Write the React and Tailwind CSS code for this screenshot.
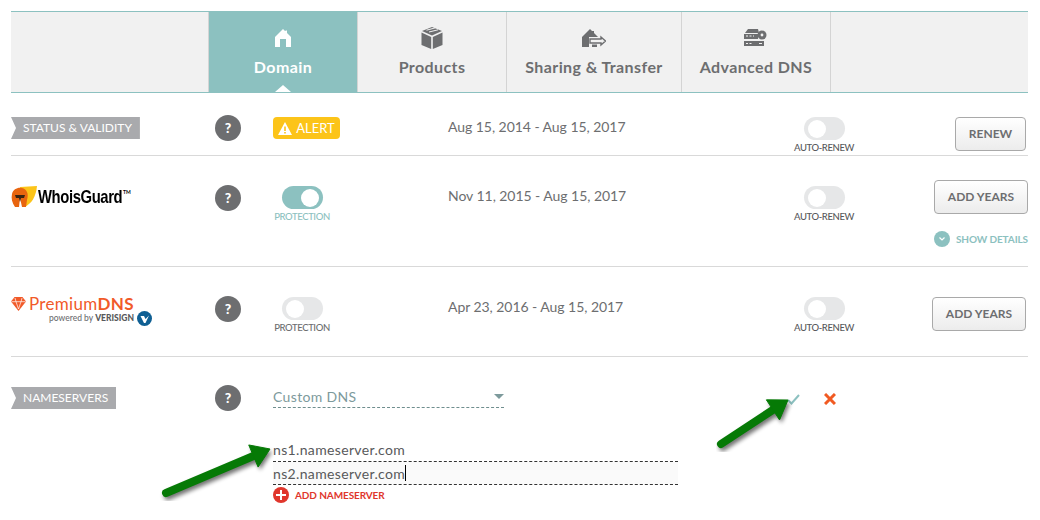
const HomeIcon = ({ className }) => (
  <svg viewBox="0 0 16 18" className={className} fill="currentColor">
    <path d="M8 0 L10 2 L11 1.5 L12 1.5 L12 4 L16 8 L16 18 L11 18 L11 10 L5 10 L5 18 L0 18 L0 8 L4 4 Z" />
  </svg>
);

const BoxIcon = ({ className }) => (
  <svg viewBox="0 0 22 22" className={className} fill="currentColor">
    <path d="M11 0 L21 4 L11 8.5 L1 4 Z" />
    <path d="M0.5 5.5 L10.2 10 L10.2 22 L0.5 18 Z" />
    <path d="M21.5 5.5 L11.8 10 L11.8 22 L21.5 18 Z" />
    <path d="M5.5 3.2 L14.5 0.8 M8 5 L17 2.8" stroke="#f1f1f1" strokeWidth="1" />
  </svg>
);

const TransferIcon = ({ className }) => (
  <svg viewBox="0 0 24 18" className={className} fill="currentColor">
    <path d="M8 0 L10 2 L12 2 L12 4 L16 8 L7 8 L7 18 L0 18 L0 8 Z" />
    <path d="M8 10 L19 10 L19 8 L23.5 12 L19 16 L19 14 L8 14 Z" fill="none" stroke="currentColor" strokeWidth="1.4" />
    <path d="M10 15.5 L15 15.5 L15 18 L10 18 Z" />
  </svg>
);

const ServerIcon = ({ className }) => (
  <svg viewBox="0 0 24 18" className={className} fill="currentColor">
    <path d="M4 0 L14 0 L15 4 L1 4 Z" />
    <path d="M0 5 L14 5 L14 10 L0 10 Z" />
    <path d="M0 12 L20 12 L20 17 L0 17 Z" />
    <circle cx="18" cy="6" r="4.5" />
    <circle cx="18" cy="6" r="1.4" fill="#f1f1f1" />
    <path d="M2 7 H4 M5.5 7 H7.5 M9 7 H10 M2 14.5 H4 M5.5 14.5 H7.5 M15 14.5 H18" stroke="#f1f1f1" strokeWidth="1.2" />
  </svg>
);

const Tab = ({ label, icon, active, width }) => (
  <div
    className={`relative flex flex-col items-center border-r border-[#d4d4d4] pt-[14px] ${width} ${
      active ? "bg-[#8cc1c0] text-white" : "text-[#6d6e70]"
    }`}
  >
    <div className="flex h-[24px] items-center">{icon}</div>
    <span className="mt-[7px] text-[16px] font-bold leading-[20px] tracking-[0.4px]">{label}</span>
    {active && (
      <span className="absolute bottom-0 left-1/2 h-0 w-0 -translate-x-1/2 border-x-[8px] border-b-[7px] border-x-transparent border-b-white" />
    )}
  </div>
);

const Question = () => (
  <div className="flex h-[26px] w-[26px] items-center justify-center rounded-full bg-[#6d6e70] text-[14px] font-black leading-none text-white">
    ?
  </div>
);

const Toggle = ({ on, label, labelClass }) => (
  <div className="flex flex-col items-center">
    <div
      className={`flex h-[23px] w-[41px] items-center rounded-full px-[4px] ${
        on ? "justify-end bg-[#8cc1c0]" : "justify-start bg-[#e6e7e8]"
      }`}
    >
      <div className="h-[18px] w-[18px] rounded-full bg-white" />
    </div>
    <span className={`mt-[2px] whitespace-nowrap text-[9.5px] font-medium leading-[12px] tracking-[-0.4px] ${labelClass}`}>{label}</span>
  </div>
);

const Tag = ({ children }) => (
  <div className="inline-flex h-[22px] items-center justify-self-start bg-[#a9aaad] pl-[12px] pr-[8px] text-[12px] leading-none text-white [clip-path:polygon(0_0,100%_0,100%_100%,0_100%,5px_50%)]">
    {children}
  </div>
);

const Button = ({ children, className }) => (
  <button
    className={`flex h-[34px] items-center justify-center rounded-[4px] border border-[#a9a9a9] bg-gradient-to-b from-white to-[#ececec] text-[12px] font-bold text-[#6d6e70] ${className}`}
  >
    {children}
  </button>
);

const WhoisGuardLogo = () => (
  <div className="flex items-center">
    <svg viewBox="0 0 27 23" className="h-[23px] w-[27px]">
      <path d="M9 1 L26 0 C25 10 21 18 13 21 Z" fill="#fcc419" />
      <path d="M1 8 C2 3 7 1 11 2 C16 3 18 8 16 14 L15 21 L11 21 L9 12 L8 21 L4 21 C1 17 0 12 1 8 Z" fill="#e8650f" />
      <path d="M4 9 H14 L13 12 L10 12 L9 16 L8 12 L5 12 Z" fill="#3a2412" />
    </svg>
    <div className="w-[84px]">
      <span className="inline-block origin-left scale-x-[0.78] font-['Liberation_Sans',sans-serif] text-[19px] font-bold leading-none tracking-[-0.5px] text-black">
        WhoisGuard
      </span>
    </div>
    <span className="mb-[10px] ml-[1px] text-[5px] font-bold leading-none text-black">TM</span>
  </div>
);

const PremiumLogo = () => (
  <div className="-mt-[1px] flex flex-col">
    <div className="flex items-center">
      <svg viewBox="0 0 15 14" className="h-[14px] w-[15px]" fill="#f15a29">
        <path d="M3.5 0 H11.5 L15 4.5 L7.5 14 L0 4.5 Z" />
        <path d="M0.5 4.7 H14.5 M4 1 L5 4.7 L7.5 12 L10 4.7 L11 1" stroke="#fff" strokeWidth="0.7" fill="none" />
      </svg>
      <span className="ml-[3px] text-[17px] leading-none tracking-[0.3px] text-[#f15a29]">
        Premium<span className="font-bold">DNS</span>
      </span>
    </div>
    <div className="-mt-[1px] ml-[38px] flex items-center">
      <span className="whitespace-nowrap text-[8.5px] font-medium leading-none text-[#6d6e70]">powered by</span>
      <span className="ml-[2px] text-[8.5px] font-black leading-none text-[#58595b]">VERISIGN</span>
      <div className="ml-[3px] flex h-[15px] w-[15px] items-center justify-center rounded-full bg-[#0f5f93]">
        <svg viewBox="0 0 10 10" className="h-[10px] w-[10px]" fill="#fff">
          <path d="M0.5 2 L4 2 L5.5 5 L9 1.5 L5.5 9 L4 9 Z" />
        </svg>
      </div>
    </div>
  </div>
);

const Row = ({ className, children }) => (
  <div className={`grid grid-cols-[204px_58px_175px_346px_60px_1fr] items-start border-b border-[#d9d9d9] ${className}`}>
    {children}
  </div>
);

const Arrow = ({ x1, y1, x2, y2 }) => {
  const a = Math.atan2(y2 - y1, x2 - x1);
  const back = 18;
  const spread = 12;
  const bx = x2 - Math.cos(a) * back;
  const by = y2 - Math.sin(a) * back;
  const px = -Math.sin(a) * spread;
  const py = Math.cos(a) * spread;
  const head = `M${x2} ${y2} L${bx + px} ${by + py} L${bx - px} ${by - py} Z`;
  return (
    <g>
      <g opacity="0.55" transform="translate(2 3)" filter="url(#blur)">
        <line x1={x1} y1={y1} x2={bx} y2={by} stroke="#000" strokeWidth="8" strokeLinecap="round" />
        <path d={head} fill="#000" />
      </g>
      <line x1={x1} y1={y1} x2={bx} y2={by} stroke="#067a06" strokeWidth="8" strokeLinecap="round" />
      <path d={head} fill="#067a06" stroke="#067a06" strokeWidth="1" strokeLinejoin="round" />
    </g>
  );
};

export default function App() {
  return (
    <div className="relative h-[520px] w-[1040px] overflow-hidden bg-white font-['Lato',sans-serif] text-[#6d6e70]">
      <div className="ml-[11px] w-[1017px] pt-[11px]">
        {/* Tabs */}
        <div className="flex h-[82px] border-y border-[#8cc1c0] bg-[#f1f1f1]">
          <div className="w-[198px] border-r border-[#d4d4d4]" />
          <Tab active width="w-[149px]" label="Domain" icon={<HomeIcon className="h-[18px] w-[16px]" />} />
          <Tab width="w-[149px]" label="Products" icon={<BoxIcon className="h-[22px] w-[22px]" />} />
          <Tab width="w-[175px]" label="Sharing & Transfer" icon={<TransferIcon className="h-[18px] w-[24px]" />} />
          <Tab width="w-[149px]" label="Advanced DNS" icon={<ServerIcon className="h-[18px] w-[24px]" />} />
        </div>

        {/* Status & validity */}
        <Row className="h-[63px] pt-[24px]">
          <Tag>STATUS &amp; VALIDITY</Tag>
          <div className="-mt-[2px]"><Question /></div>
          <div className="flex h-[22px] w-[67px] items-center justify-center rounded-[4px] bg-[#fcc419] text-[13px] leading-none text-white">
            <svg viewBox="0 0 14 13" className="mr-[4px] h-[13px] w-[14px]">
              <path d="M7 0 L14 13 L0 13 Z" fill="#fff" />
              <path d="M7 4.5 V9 M7 10 V11.5" stroke="#fcc419" strokeWidth="1.6" />
            </svg>
            ALERT
          </div>
          <span className="-mt-[1px] text-[14px] leading-[22px] tracking-[-0.05px]">Aug 15, 2014 - Aug 15, 2017</span>
          <Toggle label="AUTO-RENEW" labelClass="text-[#58595b]" />
          <div className="flex justify-end pr-[2px]">
            <Button className="w-[71px]">RENEW</Button>
          </div>
        </Row>

        {/* WhoisGuard */}
        <Row className="h-[111px] pt-[29px]">
          <WhoisGuardLogo />
          <div><Question /></div>
          <div className="mt-[1px] w-[58px]">
            <Toggle on label="PROTECTION" labelClass="text-[#8cc1c0]" />
          </div>
          <span className="text-[14px] leading-[22px] tracking-[-0.05px]">Nov 11, 2015 - Aug 15, 2017</span>
          <div className="mt-[1px]">
            <Toggle label="AUTO-RENEW" labelClass="text-[#58595b]" />
          </div>
          <div className="-mt-[5px] flex flex-col items-end">
            <Button className="w-[94px]">ADD YEARS</Button>
            <div className="mt-[17px] flex items-center">
              <div className="mr-[6px] flex h-[16px] w-[16px] items-center justify-center rounded-full bg-[#8cc1c0]">
                <svg viewBox="0 0 8 6" className="h-[6px] w-[8px]" fill="none" stroke="#fff" strokeWidth="1.2">
                  <path d="M1.5 1.5 L4 4 L6.5 1.5" />
                </svg>
              </div>
              <span className="text-[10px] font-bold leading-none tracking-[-0.1px] text-[#8cc1c0]">SHOW DETAILS</span>
            </div>
          </div>
        </Row>

        {/* PremiumDNS */}
        <Row className="h-[90px] pt-[29px]">
          <PremiumLogo />
          <div><Question /></div>
          <div className="mt-[1px] w-[58px]">
            <Toggle label="PROTECTION" labelClass="text-[#6d6e70]" />
          </div>
          <span className="text-[14px] leading-[22px] tracking-[-0.05px]">Apr 23, 2016 - Aug 15, 2017</span>
          <div className="mt-[1px]">
            <Toggle label="AUTO-RENEW" labelClass="text-[#58595b]" />
          </div>
          <div className="mt-[1px] flex justify-end pr-[2px]">
            <Button className="w-[94px]">ADD YEARS</Button>
          </div>
        </Row>

        {/* Nameservers */}
        <div className="grid grid-cols-[204px_58px_1fr] items-start pt-[30px]">
          <Tag>NAMESERVERS</Tag>
          <div className="-mt-[2px]"><Question /></div>
          <div className="relative -mt-[2px]">
            <div className="flex h-[23px] w-[231px] items-center justify-between border-b border-dashed border-[#6f8e8e] text-[14px] tracking-[0.35px] text-[#7d9a9c]">
              <span>Custom DNS</span>
              <span className="h-0 w-0 border-x-[5px] border-t-[5px] border-x-transparent border-t-[#7d9a9c]" />
            </div>
            {/* confirm / cancel */}
            <div className="absolute left-[514px] top-[8px] flex items-center gap-[24px]">
              <svg viewBox="0 0 13 11" className="h-[11px] w-[13px]" fill="none" stroke="#8cc1c0" strokeWidth="2">
                <path d="M1 6 L4.5 9.5 L12 1" />
              </svg>
              <svg viewBox="0 0 12 12" className="h-[12px] w-[12px]" fill="none" stroke="#f15a22" strokeWidth="3">
                <path d="M1 1 L11 11 M11 1 L1 11" />
              </svg>
            </div>
            <div className="mt-[30px] w-[405px] text-[14px] tracking-[0.35px] text-[#58595b]">
              <div className="flex h-[24px] items-center border-b border-dashed border-[#333]">ns1.nameserver.com</div>
              <div className="flex h-[23px] items-center border-b border-dashed border-[#333] bg-[#fafafa]">
                ns2.nameserver.com<span className="h-[16px] w-px bg-black" />
              </div>
            </div>
            <div className="mt-[2px] flex items-center">
              <div className="flex h-[16px] w-[16px] items-center justify-center rounded-full bg-[#e0362c]">
                <svg viewBox="0 0 10 10" className="h-[10px] w-[10px]" stroke="#fff" strokeWidth="2">
                  <path d="M5 0 V10 M0 5 H10" />
                </svg>
              </div>
              <span className="ml-[6px] text-[10px] font-bold leading-none tracking-[-0.1px] text-[#e0362c]">ADD NAMESERVER</span>
            </div>
          </div>
        </div>
      </div>

      {/* annotation arrows */}
      <svg viewBox="0 0 1040 520" className="pointer-events-none absolute left-0 top-0 h-[520px] w-[1040px]">
        <defs>
          <filter id="blur">
            <feGaussianBlur stdDeviation="2" />
          </filter>
        </defs>
        <Arrow x1={166} y1={493} x2={270} y2={449} />
        <Arrow x1={721} y1={444} x2={788} y2={400} />
      </svg>
    </div>
  );
}
